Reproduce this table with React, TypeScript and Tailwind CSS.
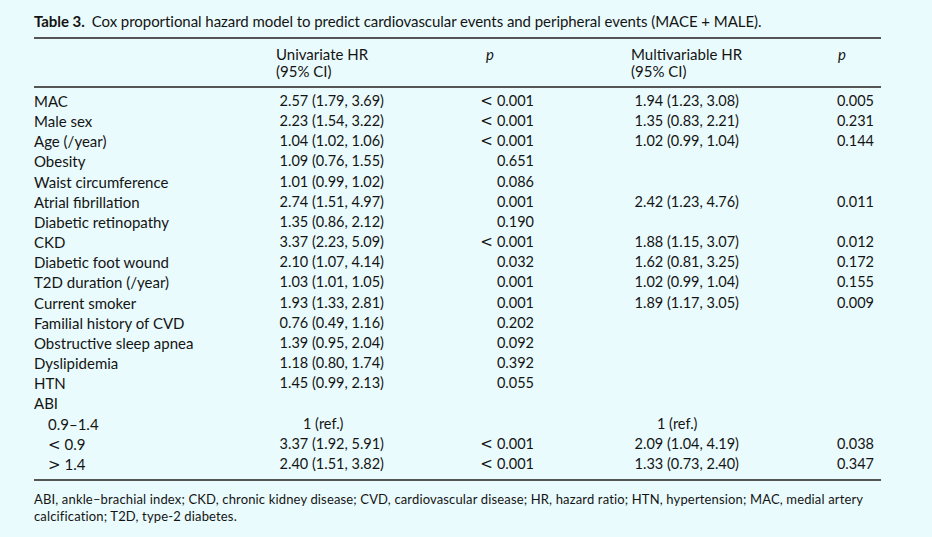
import React from 'react';

type Row = {
  label: React.ReactNode;
  indent?: boolean;
  uni?: string;
  uniRef?: boolean;
  p1?: string;
  multi?: string;
  multiRef?: boolean;
  p2?: string;
};

// wider math-style comparison signs, as in the printed table
const Sign = ({ c }: { c: string }) => (
  <span className="font-['DejaVu_Sans',sans-serif] text-[15px] mr-[4px]">{c}</span>
);

const LT = '< 0.001';

const rows: Row[] = [
  { label: 'MAC', uni: '2.57 (1.79, 3.69)', p1: LT, multi: '1.94 (1.23, 3.08)', p2: '0.005' },
  { label: 'Male sex', uni: '2.23 (1.54, 3.22)', p1: LT, multi: '1.35 (0.83, 2.21)', p2: '0.231' },
  { label: 'Age (/year)', uni: '1.04 (1.02, 1.06)', p1: LT, multi: '1.02 (0.99, 1.04)', p2: '0.144' },
  { label: 'Obesity', uni: '1.09 (0.76, 1.55)', p1: '0.651' },
  { label: 'Waist circumference', uni: '1.01 (0.99, 1.02)', p1: '0.086' },
  { label: 'Atrial fibrillation', uni: '2.74 (1.51, 4.97)', p1: '0.001', multi: '2.42 (1.23, 4.76)', p2: '0.011' },
  { label: 'Diabetic retinopathy', uni: '1.35 (0.86, 2.12)', p1: '0.190' },
  { label: 'CKD', uni: '3.37 (2.23, 5.09)', p1: LT, multi: '1.88 (1.15, 3.07)', p2: '0.012' },
  { label: 'Diabetic foot wound', uni: '2.10 (1.07, 4.14)', p1: '0.032', multi: '1.62 (0.81, 3.25)', p2: '0.172' },
  { label: 'T2D duration (/year)', uni: '1.03 (1.01, 1.05)', p1: '0.001', multi: '1.02 (0.99, 1.04)', p2: '0.155' },
  { label: 'Current smoker', uni: '1.93 (1.33, 2.81)', p1: '0.001', multi: '1.89 (1.17, 3.05)', p2: '0.009' },
  { label: 'Familial history of CVD', uni: '0.76 (0.49, 1.16)', p1: '0.202' },
  { label: 'Obstructive sleep apnea', uni: '1.39 (0.95, 2.04)', p1: '0.092' },
  { label: 'Dyslipidemia', uni: '1.18 (0.80, 1.74)', p1: '0.392' },
  { label: 'HTN', uni: '1.45 (0.99, 2.13)', p1: '0.055' },
  { label: 'ABI' },
  { label: '0.9–1.4', indent: true, uni: '1 (ref.)', uniRef: true, multi: '1 (ref.)', multiRef: true },
  { label: <><Sign c="<" />0.9</>, indent: true, uni: '3.37 (1.92, 5.91)', p1: LT, multi: '2.09 (1.04, 4.19)', p2: '0.038' },
  { label: <><Sign c=">" />1.4</>, indent: true, uni: '2.40 (1.51, 3.82)', p1: LT, multi: '1.33 (0.73, 2.40)', p2: '0.347' },
];

const pCell = (v?: string) =>
  v === LT ? (
    <>
      <Sign c="<" />
      0.001
    </>
  ) : (
    v
  );

const cols = 'grid grid-cols-[242px_108px_150px_205px_135px]';

export default function App() {
  return (
    <div className="w-[932px] h-[537px] bg-[#eafbfd] text-[#141414] font-['Lato','Liberation_Sans',sans-serif] overflow-hidden">
      <div className="ml-[34px] w-[847px] pt-[11px]">
        <p className="text-[15px] leading-5 whitespace-nowrap tracking-[-0.05px]">
          <span className="font-bold">Table 3.</span>
          <span className="ml-[7px]">Cox proportional hazard model to predict cardiovascular events and peripheral events (MACE + MALE).</span>
        </p>

        <div className="mt-[6px] border-t-2 border-[#555]" />

        {/* header */}
        <div className={`${cols} text-[15px] leading-[17px] pt-[7px] pb-[6px]`}>
          <div />
          <div className="whitespace-nowrap">
            Univariate HR
            <br />
            (95% CI)
          </div>
          <div className="pl-[102px] italic">p</div>
          <div className="pl-[97px] whitespace-nowrap">
            Multivariable HR
            <br />
            (95% CI)
          </div>
          <div className="pl-[99px] italic">p</div>
        </div>

        <div className="border-t-2 border-[#555]" />

        {/* body */}
        <div className="pt-[3px] pb-[5px] text-[15px]">
          {rows.map((r, i) => (
            <div key={i} className={`${cols} h-[20.17px] leading-[20px]`}>
              <div className={r.indent ? 'pl-[14px] whitespace-nowrap' : 'whitespace-nowrap'}>{r.label}</div>
              <div className={r.uniRef ? 'pl-[27px] whitespace-nowrap text-[14.5px]' : 'text-right whitespace-nowrap text-[14.5px]'}>{r.uni}</div>
              <div className="text-right whitespace-nowrap text-[14.5px]">{pCell(r.p1)}</div>
              <div className={r.multiRef ? 'pl-[123px] whitespace-nowrap text-[14.5px]' : 'text-right whitespace-nowrap text-[14.5px]'}>{r.multi}</div>
              <div className="text-right whitespace-nowrap text-[14.5px]">{r.p2}</div>
            </div>
          ))}
        </div>

        <div className="border-t-2 border-[#555]" />

        <p className="mt-[10px] text-[13px] leading-[17px] w-[830px] tracking-[0.15px]">
          ABI, ankle–brachial index; CKD, chronic kidney disease; CVD, cardiovascular disease; HR, hazard ratio; HTN, hypertension; MAC, medial artery calcification; T2D, type-2 diabetes.
        </p>
      </div>
    </div>
  );
}
